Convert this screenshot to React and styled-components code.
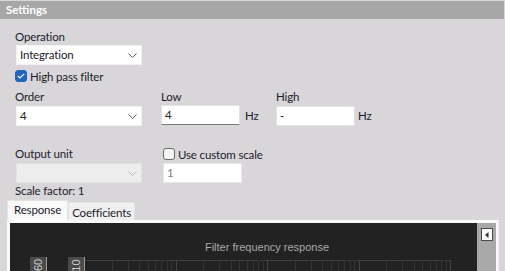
import React from 'react';
import styled, { createGlobalStyle } from 'styled-components';

const Global = createGlobalStyle`
  html, body { margin: 0; padding: 0; background: #d8d6d9; }
  body { font-family: Lato, "Liberation Sans", sans-serif; }
`;

const Window = styled.div`
  width: 505px;
  height: 271px;
  overflow: hidden;
  background: #d8d6d9;
  display: flex;
  flex-direction: column;
`;

const Header = styled.div`
  margin-top: 1px;
  margin-right: 1px;
  height: 18px;
  background: #a7a7a7;
  color: #fff;
  font-weight: bold;
  font-size: 11.5px;
  line-height: 18px;
  padding-left: 6px;
`;

const Form = styled.div`
  padding-left: 15px;
  display: grid;
  grid-template-columns: 146px 115px 1fr;
  color: #1c1c2c;
  font-size: 11.5px;
  letter-spacing: -0.15px;
`;

const Label = styled.div`
  height: 16px;
  line-height: 16px;
  margin-top: ${p => p.$top || 0}px;
  margin-left: ${p => p.$left || 0}px;
`;

const Select = styled.div`
  width: 117px;
  height: 18px;
  margin-left: 1px;
  margin-top: ${p => p.$top || 0}px;
  background: ${p => (p.$disabled ? '#eeedee' : '#fff')};
  border: 1px solid ${p => (p.$disabled ? '#e4e3e4' : '#f2f2f2')};
  display: flex;
  align-items: center;
  justify-content: space-between;
  padding: 0 4px 0 3px;
  box-sizing: content-box;
  line-height: 18px;
  svg { flex: none; }
`;

const Check = styled.div`
  display: flex;
  align-items: center;
  gap: 3px;
  height: 16px;
  margin-top: ${p => p.$top || 0}px;
  margin-left: ${p => p.$left || 0}px;
`;

const Box = styled.span`
  width: 12px;
  height: 12px;
  border-radius: 3px;
  box-sizing: border-box;
  display: inline-flex;
  align-items: center;
  justify-content: center;
  background: ${p => (p.$on ? '#1f64bf' : '#f3f3f3')};
  border: 1px solid ${p => (p.$on ? '#1f64bf' : '#6b6b6b')};
`;

const InputRow = styled.div`
  display: flex;
  align-items: center;
  gap: ${p => p.$gap ?? 5}px;
  margin-top: ${p => p.$top || 0}px;
  margin-left: ${p => p.$left || 0}px;
`;

const Input = styled.div`
  width: 79px;
  height: 20px;
  box-sizing: border-box;
  background: #fff;
  border: 1px solid ${p => (p.$disabled ? '#e6e6e6' : '#e2e2e2')};
  border-bottom-color: ${p => (p.$focus ? '#7a7a7a' : p.$disabled ? '#e6e6e6' : '#e2e2e2')};
  padding-left: 3px;
  line-height: 18px;
  color: ${p => (p.$disabled ? '#7d7d7d' : '#1c1c2c')};
  border-radius: 1px;
`;

const Tabs = styled.div`
  display: flex;
  align-items: flex-end;
  margin: 1px 0 0 7px;
  font-size: 11.5px;
  letter-spacing: -0.15px;
  color: #1c1c2c;
`;

const Tab = styled.div`
  height: ${p => (p.$active ? 20 : 18)}px;
  line-height: ${p => (p.$active ? 17 : 19)}px;
  padding: 0 ${p => (p.$active ? 6 : 3)}px;
  background: ${p => (p.$active ? '#f9f9f9' : '#f0f0f0')};
  border: 1px solid #e3e3e3;
  border-bottom: none;
  box-sizing: border-box;
`;

const Panel = styled.div`
  margin-left: 7px;
  width: 492px;
  flex: 1;
  box-sizing: border-box;
  background: #f9f9f9;
  padding: 3px 0 0 3px;
  border-right: 1px solid #ececec;
  display: flex;
`;

const Chart = styled.div`
  flex: 1;
  background: #222222;
  overflow: hidden;
`;

const Side = styled.div`
  width: 19px;
  background: #a8a8a8;
  display: flex;
  justify-content: center;
  padding-top: 5px;
  box-sizing: border-box;
  margin-right: 2px;
`;

const MiniBtn = styled.div`
  width: 10px;
  height: 11px;
  background: #fafafa;
  border: 1px solid #4a4a4a;
  display: flex;
  align-items: center;
  justify-content: center;
`;

const Chevron = ({ color = '#5a5a5a' }) => (
  <svg width="9" height="5" viewBox="0 0 9 5">
    <path d="M0.5 0.5 L4.5 4.5 L8.5 0.5" fill="none" stroke={color} strokeWidth="1" />
  </svg>
);

const tickX = (() => {
  const xs = [];
  const start = 74, dec = 91.5;
  for (let d = 0; d < 4; d++) {
    for (let m = 1; m < 10; m++) xs.push({ x: start + dec * (d + Math.log10(m)), major: m === 1 });
  }
  xs.push({ x: start + dec * 4, major: true });
  return xs;
})();

const ChartSvg = () => (
  <svg width="468" height="49" viewBox="0 0 468 49">
    <text x="257" y="28" fill="#a9a9a9" fontSize="11" fontFamily="Liberation Sans, sans-serif" textAnchor="middle">
      Filter frequency response
    </text>
    <line x1="74" y1="37.5" x2="440" y2="37.5" stroke="#3c3c3c" />
    {tickX.map((t, i) => (
      <line key={i} x1={Math.round(t.x) + 0.5} y1="37" x2={Math.round(t.x) + 0.5} y2="49" stroke={t.major ? '#444' : '#333'} />
    ))}
    <rect x="20" y="34" width="16" height="20" fill="#4a4a4a" />
    <line x1="36.5" y1="34" x2="36.5" y2="49" stroke="#9a9a9a" />
    <text transform="translate(32 48) rotate(-90)" fill="#c8c8c8" fontSize="11" fontFamily="Liberation Sans, sans-serif">60</text>
    <rect x="58" y="34" width="16" height="20" fill="#4a4a4a" />
    <line x1="74.5" y1="34" x2="74.5" y2="49" stroke="#9a9a9a" />
    <text transform="translate(70 54) rotate(-90)" fill="#c8c8c8" fontSize="11" fontFamily="Liberation Sans, sans-serif">110</text>
  </svg>
);

export default function App() {
  return (
    <Window>
      <Global />
      <Header>Settings</Header>
      <Form>
        <Label $top={10} style={{ gridColumn: '1 / 4' }}>Operation</Label>
        <Select $top={0} style={{ gridColumn: '1 / 4' }}>
          <span>Integration</span>
          <Chevron />
        </Select>
        <Check $top={3} style={{ gridColumn: '1 / 4' }}>
          <Box $on>
            <svg width="8" height="6" viewBox="0 0 8 6">
              <path d="M0.8 3 L3 5 L7.2 0.8" fill="none" stroke="#fff" strokeWidth="1.2" />
            </svg>
          </Box>
          <span>High pass filter</span>
        </Check>

        <Label $top={5}>Order</Label>
        <Label $top={5}>Low</Label>
        <Label $top={5}>High</Label>

        <Select $top={1}>
          <span>4</span>
          <Chevron />
        </Select>
        <InputRow $top={-1}>
          <Input $focus>4</Input>
          <span>Hz</span>
        </InputRow>
        <InputRow $top={0} $gap={3}>
          <Input>-</Input>
          <span>Hz</span>
        </InputRow>

        <Label $top={20}>Output unit</Label>
        <Check $top={20} $left={2} style={{ gridColumn: '2 / 4' }}>
          <Box />
          <span>Use custom scale</span>
        </Check>

        <Select $top={1} $disabled>
          <span />
          <Chevron color="#b8b8b8" />
        </Select>
        <InputRow $top={1} $left={2} style={{ gridColumn: '2 / 4' }}>
          <Input $disabled>1</Input>
        </InputRow>

        <Label $top={0} style={{ gridColumn: '1 / 4' }}>Scale factor: 1</Label>
      </Form>
      <Tabs>
        <Tab $active>Response</Tab>
        <Tab>Coefficients</Tab>
      </Tabs>
      <Panel>
        <Chart>
          <ChartSvg />
        </Chart>
        <Side>
          <MiniBtn>
            <svg width="4" height="6" viewBox="0 0 4 6">
              <path d="M3.5 0 L0 3 L3.5 6 Z" fill="#333" />
            </svg>
          </MiniBtn>
        </Side>
      </Panel>
    </Window>
  );
}
